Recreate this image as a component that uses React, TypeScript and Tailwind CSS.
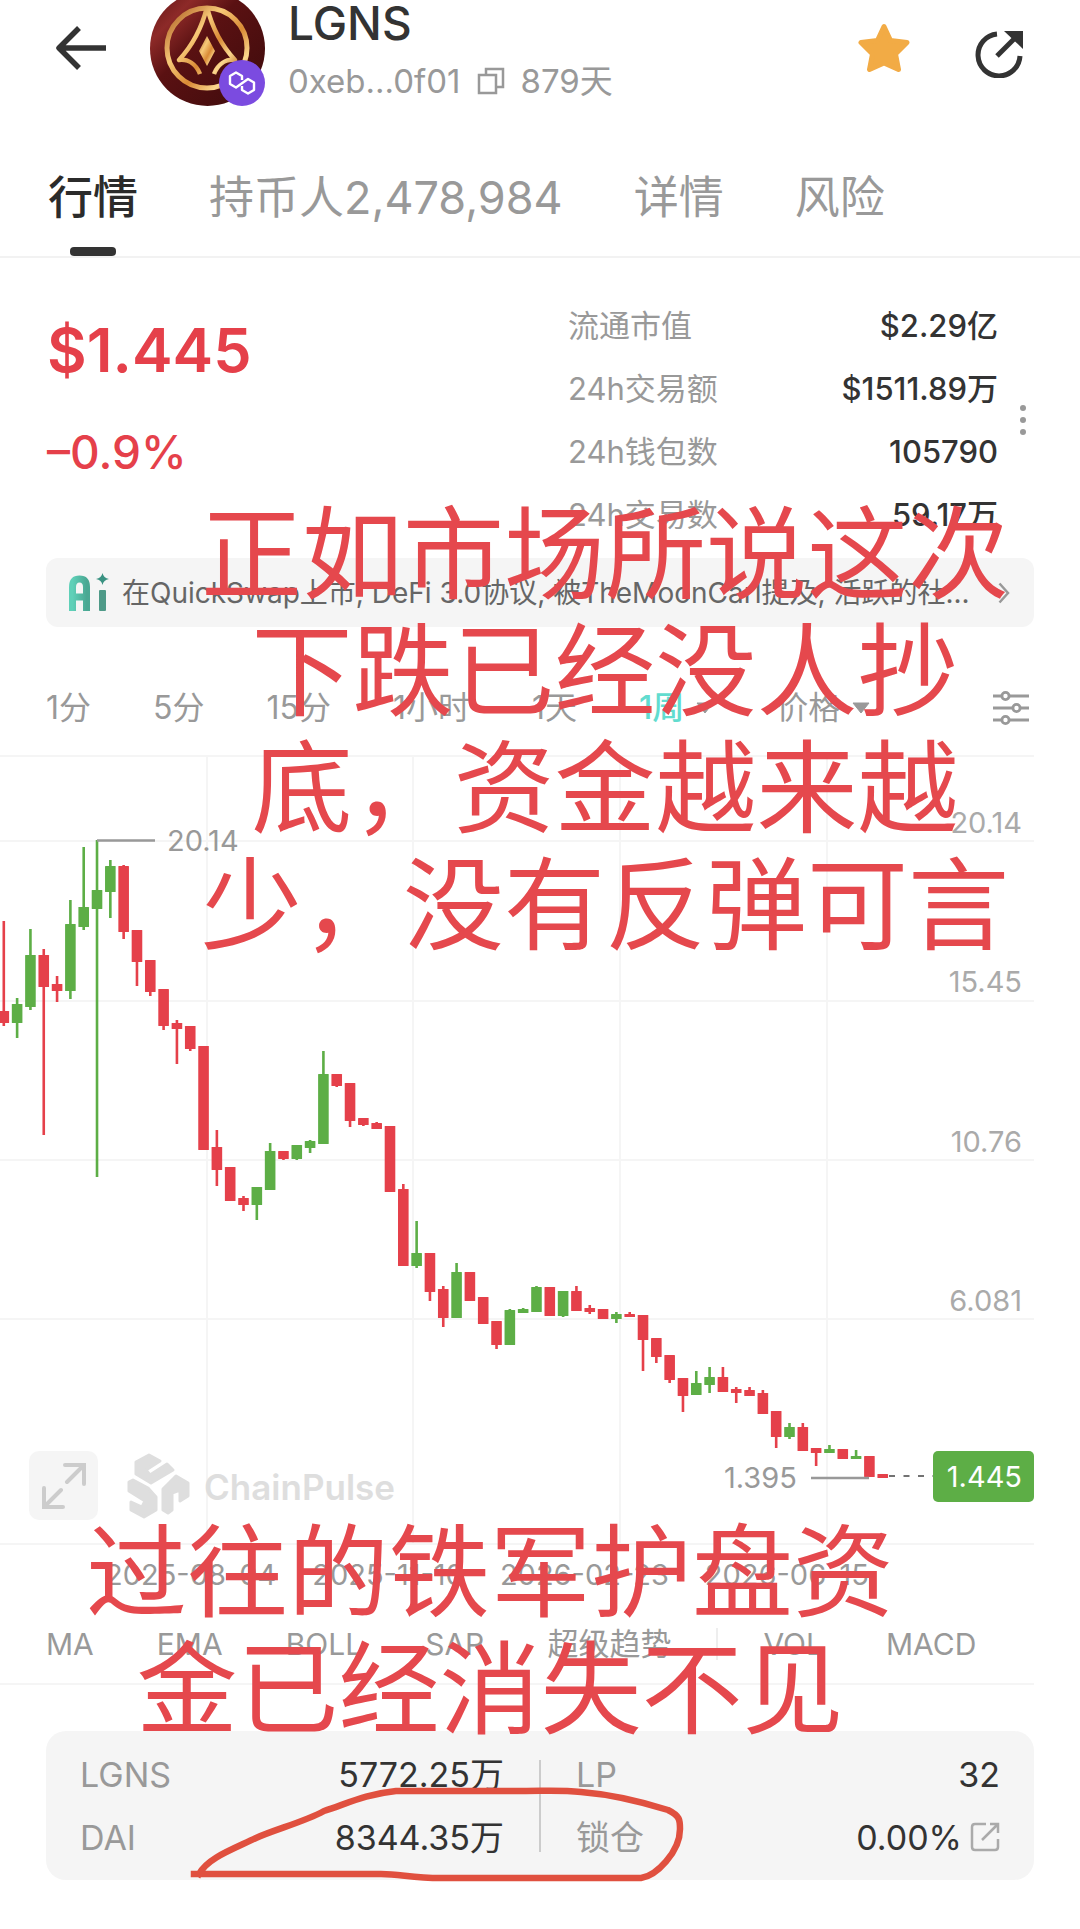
import React from "react";

type Candle = [up: 0 | 1, top: number, bottom: number, high: number, low: number];

/* Candle geometry in chart units, left to right. */
const candles: Candle[] = [
  [0, 256, 268, 166, 271], [1, 249, 268, 243, 283], [1, 200, 252, 174, 255], [0, 200, 232, 194, 380],
  [0, 229, 236, 221, 247], [1, 169, 236, 145, 244], [1, 152, 172, 92, 175], [1, 135, 154, 85, 422],
  [1, 111, 137, 105, 163], [0, 111, 177, 110, 184], [0, 175, 207, 175, 231], [0, 205, 237, 205, 241],
  [0, 234, 271, 234, 275], [0, 268, 274, 265, 309], [0, 271, 294, 271, 296], [0, 291, 395, 291, 395],
  [0, 392, 415, 375, 431], [0, 412, 446, 412, 446], [0, 443, 450, 441, 456], [1, 432, 450, 432, 465],
  [1, 396, 435, 388, 435], [0, 396, 404, 396, 405], [1, 390, 404, 390, 405], [1, 386, 393, 385, 398],
  [1, 319, 389, 296, 389], [0, 319, 331, 319, 332], [0, 328, 366, 328, 372], [0, 363, 370, 363, 371],
  [0, 368, 374, 367, 374], [0, 371, 437, 371, 437], [0, 434, 511, 429, 511], [1, 498, 511, 466, 513],
  [0, 498, 537, 498, 546], [0, 534, 563, 531, 572], [1, 517, 563, 508, 563], [0, 517, 546, 517, 546],
  [0, 542, 569, 542, 569], [0, 566, 590, 566, 594], [1, 555, 590, 554, 590], [1, 554, 558, 553, 558],
  [1, 532, 557, 531, 557], [0, 532, 561, 532, 561], [1, 536, 561, 536, 562], [0, 536, 556, 531, 556],
  [0, 553, 557, 550, 559], [0, 554, 564, 554, 564], [1, 559, 564, 557, 568], [0, 559, 562, 557, 562],
  [0, 560, 585, 560, 616], [0, 583, 602, 583, 608], [0, 600, 625, 600, 628], [0, 623, 641, 623, 657],
  [1, 628, 640, 616, 640], [1, 622, 630, 612, 638], [0, 622, 637, 612, 637], [0, 634, 638, 632, 648],
  [0, 635, 641, 632, 641], [0, 638, 659, 635, 659], [0, 656, 682, 656, 693], [1, 672, 682, 668, 684],
  [0, 672, 696, 668, 696], [0, 693, 698, 693, 711], [1, 694, 698, 690, 698], [0, 694, 704, 694, 704],
  [1, 701, 704, 695, 704], [0, 701, 722, 701, 722], [0, 719, 723, 719, 723],
];

const axisLabels: [string, number][] = [["20.14", 68], ["15.45", 227], ["10.76", 387], ["6.081", 546]];
const gridRows = [0, 85, 245, 404, 563, 788];
const gridColumns = [207, 413, 620, 827];

const stats = [
  ["流通市值", "$2.29亿"],
  ["24h交易额", "$1511.89万"],
  ["24h钱包数", "105790"],
  ["24h交易数", "59.17万"],
];

function TokenLogo() {
  return (
    <div className="relative size-[115px] shrink-0">
      <svg viewBox="0 0 115 115" className="size-full" aria-hidden="true">
        <defs>
          <linearGradient id="maroon" x1="0" y1="0" x2="1" y2="1">
            <stop offset="0" stopColor="#5d1214" />
            <stop offset="0.22" stopColor="#8d2a28" />
            <stop offset="0.42" stopColor="#5a1112" />
            <stop offset="1" stopColor="#3d0b0c" />
          </linearGradient>
          <linearGradient id="gold" x1="0" y1="0" x2="1" y2="1">
            <stop offset="0" stopColor="#a9561d" />
            <stop offset="0.35" stopColor="#f7c978" />
            <stop offset="0.6" stopColor="#d98a35" />
            <stop offset="0.8" stopColor="#fbd78d" />
            <stop offset="1" stopColor="#b9681f" />
          </linearGradient>
        </defs>
        <circle cx="57.5" cy="57.5" r="57.5" fill="url(#maroon)" />
        <g fill="none" stroke="url(#gold)" strokeWidth="4.5" strokeLinejoin="round">
          <circle cx="57" cy="57" r="40" strokeWidth="5" />
          <path d="M57 16C52 36 42 55 29 69C38 68 46 73 50 83M57 16C62 36 72 55 85 69C76 68 68 73 64 83" />
        </g>
        <path d="M57 45L65 60L57 75L49 60Z" fill="url(#gold)" />
      </svg>
      <span className="absolute right-0 bottom-0 flex size-[46px] items-center justify-center rounded-full bg-[#7b4be0]">
        <svg viewBox="0 0 28 24" className="w-7" fill="none" stroke="#fff" strokeWidth="2.4" strokeLinejoin="round" aria-hidden="true">
          <path d="M14 9V5L8 1.500L2 5V13L8 16.500L20 8L26 11.500V19L20 22.500L14 19V15" />
        </svg>
      </span>
    </div>
  );
}

function Header() {
  return (
    <header className="flex h-24 items-center pr-[57px] pl-[55px]">
      <button aria-label="返回" className="mr-[44px]">
        <svg viewBox="0 0 51 44" className="w-[51px]" fill="none" stroke="#333" strokeWidth="5.500" aria-hidden="true">
          <path d="M51 22H4M24 2L4 22L24 42" strokeLinejoin="round" />
        </svg>
      </button>
      <TokenLogo />
      <div className="ml-[23px] shrink-0 pt-[14px]">
        <h1 className="text-[46px] leading-[46px] font-medium text-[#333]">LGNS</h1>
        <div className="mt-[6px] flex items-center text-[33px] leading-[58px] text-[#999]">
          <span>0xeb...0f01</span>
          <button aria-label="复制地址" className="mx-4">
            <svg viewBox="0 0 28 28" className="size-7" fill="none" stroke="#999" strokeWidth="2.500" aria-hidden="true">
              <path d="M2 8H19V26H2ZM9 8V2H26V20H19" />
            </svg>
          </button>
          <span>879天</span>
        </div>
      </div>
      <button aria-label="收藏" className="ml-auto">
        <svg viewBox="0 0 52 50" className="w-[52px]" fill="#f2ab45" stroke="#f2ab45" strokeWidth="5" strokeLinejoin="round" aria-hidden="true">
          <path d="M26 3.500L32.500 17.500L49 19.500L37.500 31L40.500 46.500L26 40L11.500 46.500L14.500 31L3 19.500L19.500 17.500Z" />
        </svg>
      </button>
      <button aria-label="分享" className="ml-[65px] pt-3">
        <svg viewBox="0 0 48 48" className="size-12" aria-hidden="true">
          <path d="M22 4A21 21 0 1 0 45 26" fill="none" stroke="#333" strokeWidth="5" />
          <path d="M22 26L40 8" stroke="#333" strokeWidth="5" />
          <path d="M29 1H48V19Z" fill="#333" />
        </svg>
      </button>
    </header>
  );
}

function Tabs() {
  const tabs = ["行情", "持币人2,478,984", "详情", "风险"];
  return (
    <nav className="mt-[75px] flex gap-[71px] border-b-2 border-[#f2f2f2] pl-12 text-[45px] leading-[54px] whitespace-nowrap">
      {tabs.map((t, i) => (
        <button key={t} className={i === 0 ? "font-medium text-[#2b2b2b]" : "text-[#999]"}>
          {t}
          <span className={i === 0 ? "mx-auto mt-[22px] block h-[9px] w-[46px] rounded bg-[#333]" : "mt-[22px] block h-[9px]"} />
        </button>
      ))}
    </nav>
  );
}

function Quote() {
  return (
    <section className="flex pt-9 pr-[46px] pl-[47px]">
      <div className="flex-1 pt-4 text-[#e5404a]">
        <p className="text-[61px] leading-[80px] font-semibold">$1.445</p>
        <p className="mt-8 text-[46px] leading-[60px] font-medium">–0.9%</p>
      </div>
      <dl className="w-[430px] text-[31px] leading-[63px]">
        {stats.map(([k, v]) => (
          <div key={k} className="flex justify-between">
            <dt className="text-[#999]">{k}</dt>
            <dd className="font-medium text-[#333]">{v}</dd>
          </div>
        ))}
      </dl>
      <button aria-label="更多" className="mt-[110px] ml-[14px] flex h-8 w-[22px] flex-col items-center justify-between self-start py-px">
        <span className="size-[6px] rounded-full bg-[#999]" />
        <span className="size-[6px] rounded-full bg-[#999]" />
        <span className="size-[6px] rounded-full bg-[#999]" />
      </button>
    </section>
  );
}

function AiBanner() {
  return (
    <a href="#ai" className="mx-[46px] mt-3 flex h-[69px] items-center rounded-[12px] bg-[#f5f5f5] pr-6 pl-[22px] text-[28px] text-[#666]">
      <svg viewBox="0 0 42 40" className="mr-[12px] h-10 w-[42px] shrink-0" aria-label="Ai" role="img">
        <defs>
          <linearGradient id="teal" x1="0" y1="0" x2="1" y2="0">
            <stop offset="0" stopColor="#5fd0b8" />
            <stop offset="1" stopColor="#4aa893" />
          </linearGradient>
        </defs>
        <path d="M4.500 38V14Q4.500 6 11.500 6T18.500 14V38M4.500 24H18.500" fill="none" stroke="url(#teal)" strokeWidth="7" />
        <rect x="31" y="17" width="7" height="21" rx="1" fill="#4f9a88" />
        <path d="M34.500 0Q35.500 5 41 6Q35.500 7 34.500 12Q33.500 7 28 6Q33.500 5 34.500 0Z" fill="#3a9282" />
      </svg>
      <span className="flex-1 whitespace-nowrap">在QuickSwap上市, DeFi 3.0协议, 被TheMoonCarl提及, 活跃的社...</span>
      <svg viewBox="0 0 12 22" className="ml-3 w-3 shrink-0" fill="none" stroke="#999" strokeWidth="2.500" aria-hidden="true">
        <path d="M1.500 1.500L10 11L1.500 20.500" />
      </svg>
    </a>
  );
}

function Caret() {
  return (
    <svg viewBox="0 0 18 12" className="ml-3 w-[18px] shrink-0" fill="#999" aria-hidden="true">
      <path d="M1 1H17L9 11Z" stroke="#999" strokeLinejoin="round" />
    </svg>
  );
}

function Intervals() {
  return (
    <div className="mt-[51px] mb-[17px] flex h-[60px] items-center gap-[62px] pr-[51px] pl-[46px] text-[32px] whitespace-nowrap text-[#999]">
      <button>1分</button>
      <button>5分</button>
      <button>15分</button>
      <button>1小时</button>
      <button>1天</button>
      <button className="flex items-center font-medium text-[#62dccf]">1周<Caret /></button>
      <button className="flex items-center">价格<Caret /></button>
      <button aria-label="指标设置" className="ml-auto shrink-0">
        <svg viewBox="0 0 36 34" className="w-9" fill="none" stroke="#999" strokeWidth="2.800" aria-hidden="true">
          <path d="M0 5H8M17 5H36M0 17H19M28 17H36M0 29H8M17 29H36" />
          <circle cx="12.500" cy="5" r="3.600" />
          <circle cx="23.500" cy="17" r="3.600" />
          <circle cx="12.500" cy="29" r="3.600" />
        </svg>
      </button>
    </div>
  );
}

function Chart() {
  return (
    <div className="relative">
      <svg viewBox="0 0 1080 790" className="block w-full" fontSize="29" role="img" aria-label="LGNS 周K线">
        <g stroke="#f5f5f5" strokeWidth="2">
          {gridRows.map((y) => <line key={y} x1="0" x2="1034" y1={y + 1} y2={y + 1} />)}
          {gridColumns.map((x) => <line key={x} x1={x} x2={x} y1="0" y2="788" />)}
        </g>
        <g fill="#dedede" stroke="#dedede" strokeWidth="3" strokeLinejoin="round">
          <path d="M149 700L160 706L146 715L150 720L167 709L173 715L151 728L136 719V707Z" />
          <path d="M129 727L133 725L148 733L156 742V755L144 762L131 755V747L142 752L145 746L129 736Z" />
          <path d="M163 734L176 721L188 728V741L180 746V735L172 738V755L168 758L163 755Z" />
        </g>
        <text x="204" y="745" fontSize="35" fontWeight="600" fill="#dedede">ChainPulse</text>
        {candles.map(([up, top, bottom, high, low], i) => {
          const x = 3.8 + i * 13.317;
          return (
            <g key={i} fill={up ? "#5dae46" : "#e5404a"}>
              <rect x={x - 1.3} y={high} width="2.6" height={low - high} />
              <rect x={x - 5.3} y={top} width="10.600" height={bottom - top} rx="0.5" />
            </g>
          );
        })}
        <g stroke="#999" strokeWidth="2.500">
          <line x1="97" x2="155" y1="85.500" y2="85.500" />
          <line x1="811" x2="869" y1="723" y2="723" />
          <line x1="889" x2="933" y1="721" y2="721" stroke="#444" strokeWidth="1.500" strokeDasharray="6 8.500" />
        </g>
        <text x="167" y="96" fill="#999">20.14</text>
        <text x="724" y="733" fill="#999">1.395</text>
        <g fill="#aaa" textAnchor="end">
          {axisLabels.map(([t, y]) => <text key={t} x="1022" y={y + 10}>{t}</text>)}
        </g>
        <rect x="933" y="696" width="101" height="51" rx="5" fill="#5dae46" />
        <text x="1022" y="732" fill="#fff" textAnchor="end">1.445</text>
      </svg>
      <button aria-label="全屏" className="absolute bottom-[25px] left-[29px] flex size-[69px] items-center justify-center rounded-[10px] bg-[#f5f5f5]">
        <svg viewBox="0 0 44 48" className="w-11" fill="none" stroke="#ccc" strokeWidth="4" strokeLinecap="round" aria-hidden="true">
          <path d="M23 3H42V22M42 3L25 20M2 26V45H21M2 45L19 28" />
        </svg>
      </button>
    </div>
  );
}

function ChartFooter() {
  return (
    <>
      <div className="flex h-[60px] items-center gap-[36px] pl-[105px] text-[29px] whitespace-nowrap text-[#999]">
        <time>2025-08-04</time>
        <time>2025-11-10</time>
        <time>2026-02-23</time>
        <time>2026-06-15</time>
      </div>
      <div className="mr-[46px] flex h-[80px] items-center gap-[63px] border-b-2 border-[#f5f5f5] pl-[46px] text-[30px] whitespace-nowrap text-[#999]">
        <button>MA</button>
        <button>EMA</button>
        <button>BOLL</button>
        <button>SAR</button>
        <button className="text-[31px]">超级趋势</button>
        <span className="-mx-[18px] h-8 w-[2px] bg-[#eee]" />
        <button>VOL</button>
        <button>MACD</button>
      </div>
    </>
  );
}

function PoolCard() {
  return (
    <section className="mx-[46px] mt-[46px] flex h-[149px] items-center rounded-[20px] bg-[#f5f5f5] px-[34px] text-[34px] leading-[63px] text-[#333]">
      <dl className="w-[424px]">
        <div className="flex justify-between"><dt className="text-[#999]">LGNS</dt><dd>5772.25万</dd></div>
        <div className="flex justify-between"><dt className="text-[#999]">DAI</dt><dd>8344.35万</dd></div>
      </dl>
      <span className="mx-[35px] h-[92px] w-[2px] bg-[#ccc]" />
      <dl className="flex-1">
        <div className="flex justify-between"><dt className="text-[#999]">LP</dt><dd>32</dd></div>
        <div className="flex justify-between">
          <dt className="text-[#999]">锁仓</dt>
          <dd className="flex items-center">
            0.00%
            <a href="#lock" aria-label="查看锁仓" className="ml-2">
              <svg viewBox="0 0 30 30" className="size-[30px]" fill="none" stroke="#aaa" strokeWidth="2.500" aria-hidden="true">
                <path d="M16 2H5Q2 2 2 5V25Q2 28 5 28H25Q28 28 28 25V17M20 2H28V11M28 2L12 18" />
              </svg>
            </a>
          </dd>
        </div>
      </dl>
    </section>
  );
}

export default function App() {
  return (
    <main className="relative overflow-hidden bg-white pb-[49px] font-['Inter','Noto_Sans_CJK_SC',sans-serif]">
      <Header />
      <Tabs />
      <Quote />
      <AiBanner />
      <Intervals />
      <Chart />
      <ChartFooter />
      <PoolCard />
      <p className="pointer-events-none absolute top-[496px] left-[201px] text-center text-[101px] leading-[117px] whitespace-nowrap text-[#e5484d]">
        正如市场所说这次<br />下跌已经没人抄<br />底，资金越来越<br />少，没有反弹可言
      </p>
      <p className="pointer-events-none absolute top-[1514px] left-[86px] text-center text-[101px] leading-[117px] whitespace-nowrap text-[#e5484d]">
        过往的铁军护盘资<br />金已经消失不见
      </p>
      <svg viewBox="0 0 500 100" className="pointer-events-none absolute top-[1784px] left-[186px] w-[500px]" fill="none" stroke="#e0503f" strokeWidth="6.500" strokeLinecap="square" strokeLinejoin="round" aria-hidden="true">
        <path d="M8 90H195C215 90 225 94 255 94H455C470 92 494 68 494 45C494 36 494 32 482 26C450 16 420 10 395 8C375 6 360 7 340 7H210C180 10 160 20 138 27C118 38 90 45 70 54C45 66 22 74 13 90" />
      </svg>
    </main>
  );
}
